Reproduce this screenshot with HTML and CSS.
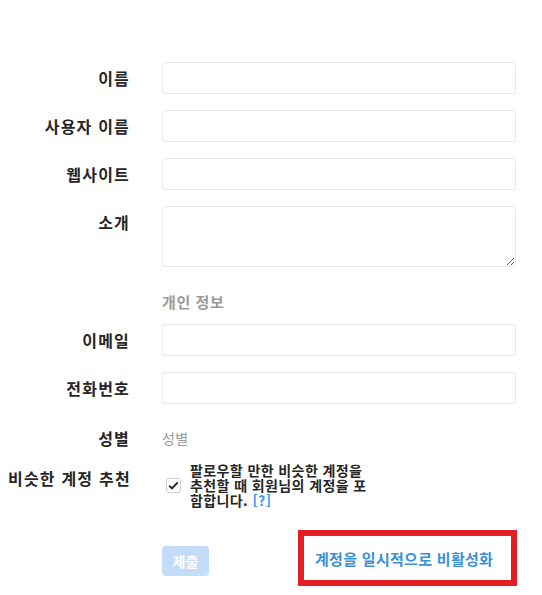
FILE: index.html
```html
<!DOCTYPE html>
<html lang="ko">
<head>
<meta charset="utf-8">
<link rel="stylesheet" href="styles.css">
</head>
<body>
<form class="form">
  <label class="label" for="name">이름</label>
  <input class="field" id="name" type="text">

  <label class="label" for="user">사용자 이름</label>
  <input class="field" id="user" type="text">

  <label class="label" for="web">웹사이트</label>
  <input class="field" id="web" type="text">

  <label class="label" for="bio">소개</label>
  <textarea class="field area" id="bio"></textarea>

  <div></div>
  <h2 class="section">개인 정보</h2>

  <label class="label" for="email">이메일</label>
  <input class="field" id="email" type="email">

  <label class="label" for="phone">전화번호</label>
  <input class="field" id="phone" type="tel">

  <label class="label label-mid">성별</label>
  <div class="gender">성별</div>

  <label class="label label-suggest">비슷한 계정 추천</label>
  <div class="suggest">
    <span class="check">
      <svg width="11" height="9" viewBox="0 0 11 9"><path d="M1.2 4.8 L4 7.4 L9.8 1.4" fill="none" stroke="#262626" stroke-width="2"/></svg>
    </span>
    <span class="suggest-text">팔로우할 만한 비슷한 계정을 추천할 때 회원님의 계정을 포함합니다. <a class="help" href="#">[?]</a></span>
  </div>

  <div></div>
  <div class="actions">
    <button class="submit" type="button" disabled>제출</button>
    <a class="disable" href="#">계정을 일시적으로 비활성화</a>
  </div>
</form>
</body>
</html>
```

FILE: styles.css
```css
html, body {
  margin: 0;
  background: #fff;
}
body {
  padding: 62px 8px 0 8px;
  font-family: "Noto Sans CJK KR", "Noto Sans", sans-serif;
  color: #262626;
}
.form {
  display: grid;
  grid-template-columns: 122px 354px;
  column-gap: 32px;
  row-gap: 16px;
  align-items: start;
}
.label {
  text-align: right;
  font-size: 16px;
  font-weight: 700;
  line-height: 20px;
  letter-spacing: 1.2px;
  padding-top: 6px;
  white-space: nowrap;
}
.field {
  box-sizing: border-box;
  width: 354px;
  height: 32px;
  margin: 0;
  border: 1px solid #e8e8e8;
  border-radius: 3px;
  background: #fff;
  font: inherit;
}
.area {
  height: 61px;
  resize: vertical;
  display: block;
}
.section {
  margin: 10px 0 -3px 0;
  font-size: 15px;
  font-weight: 700;
  letter-spacing: 0.6px;
  color: #999;
  line-height: 18px;
}
.label-mid {
  padding-top: 8px;
}
.gender {
  font-size: 14px;
  letter-spacing: 0.3px;
  color: #999;
  line-height: 20px;
  padding-top: 8px;
  height: 24px;
}
.label-suggest {
  padding-top: 0;
}
.suggest {
  display: flex;
  align-items: center;
  gap: 9px;
  padding-left: 4px;
  margin-top: -5px;
}
.check {
  box-sizing: border-box;
  width: 15px;
  height: 15px;
  border: 1px solid #cfcfcf;
  border-radius: 3px;
  display: flex;
  align-items: center;
  justify-content: center;
  flex: none;
}
.suggest-text {
  width: 184px;
  font-size: 14px;
  font-weight: 700;
  letter-spacing: 0.4px;
  line-height: 15px;
  color: #262626;
}
.help {
  color: #3897f0;
  text-decoration: none;
}
.actions {
  display: flex;
  align-items: flex-start;
  justify-content: space-between;
  margin-top: 6px;
}
.submit {
  width: 47px;
  height: 30px;
  margin-top: 16px;
  border: none;
  border-radius: 4px;
  background: #c3dcf7;
  color: #fff;
  font: inherit;
  font-size: 14px;
  font-weight: 700;
  padding: 0;
}
.disable {
  box-sizing: border-box;
  width: 219px;
  height: 56px;
  border: 6px solid #e31e26;
  display: flex;
  align-items: center;
  padding-left: 11px;
  color: #3a8fd6;
  font-size: 15px;
  letter-spacing: 0.3px;
  font-weight: 700;
  text-decoration: none;
  margin-right: -1px;
}
```
